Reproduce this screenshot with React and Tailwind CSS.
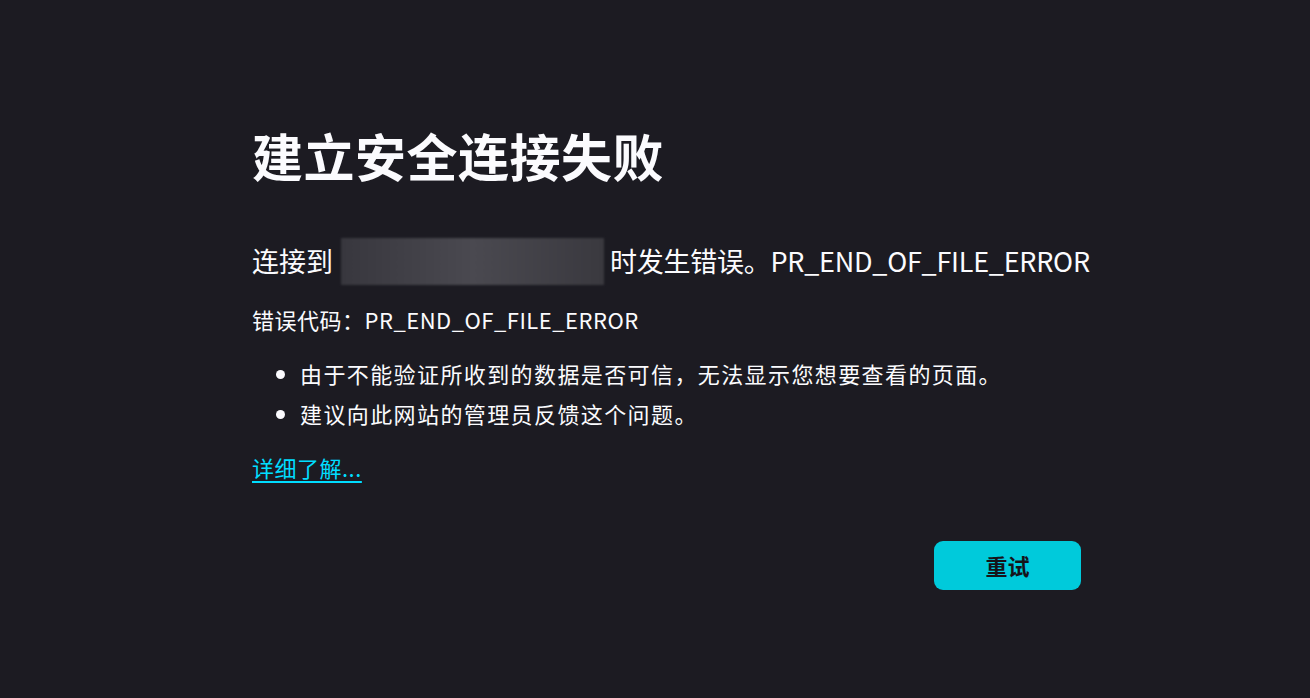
export default function App() {
  return (
    <div
      className="w-full h-[698px] bg-[#1c1b22] text-[#fbfbfe] overflow-hidden"
      style={{ fontFamily: '"Noto Sans CJK SC", "Noto Sans", sans-serif' }}
    >
      <div className="ml-[252px] w-[829px] pt-[123px]">
        <h1 className="text-[51px] font-bold leading-[64px] tracking-[0.5px]">
          建立安全连接失败
        </h1>

        <div className="mt-[50px] flex items-center text-[27px] h-[48px] whitespace-nowrap">
          <span className="shrink-0">连接到</span>
          <span className="shrink-0 ml-[8px] mr-[6px] w-[263px] h-[47px] bg-gradient-to-r from-[#38373e] via-[#4a4950] to-[#3a393f] blur-[1px]" />
          <span className="shrink-0 tracking-[-0.25px]">时发生错误。PR_END_OF_FILE_ERROR</span>
        </div>

        <p className="mt-[14px] text-[22px] leading-[40px] tracking-[0.5px]">
          错误代码：PR_END_OF_FILE_ERROR
        </p>

        <ul className="mt-[14px] pl-[48px] list-disc text-[22px] leading-[40px] tracking-[1.4px]">
          <li>由于不能验证所收到的数据是否可信，无法显示您想要查看的页面。</li>
          <li>建议向此网站的管理员反馈这个问题。</li>
        </ul>

        <a
          href="#"
          className="block mt-[16px] text-[22px] leading-[36px] text-[#00ddff] underline underline-offset-[4px] w-fit tracking-[0.5px]"
        >
          详细了解...
        </a>

        <div className="mt-[56px] flex justify-end">
          <button className="w-[147px] h-[49px] rounded-[9px] bg-[#00cadb] text-[#15141a] text-[22px] font-bold">
            重试
          </button>
        </div>
      </div>
    </div>
  );
}
